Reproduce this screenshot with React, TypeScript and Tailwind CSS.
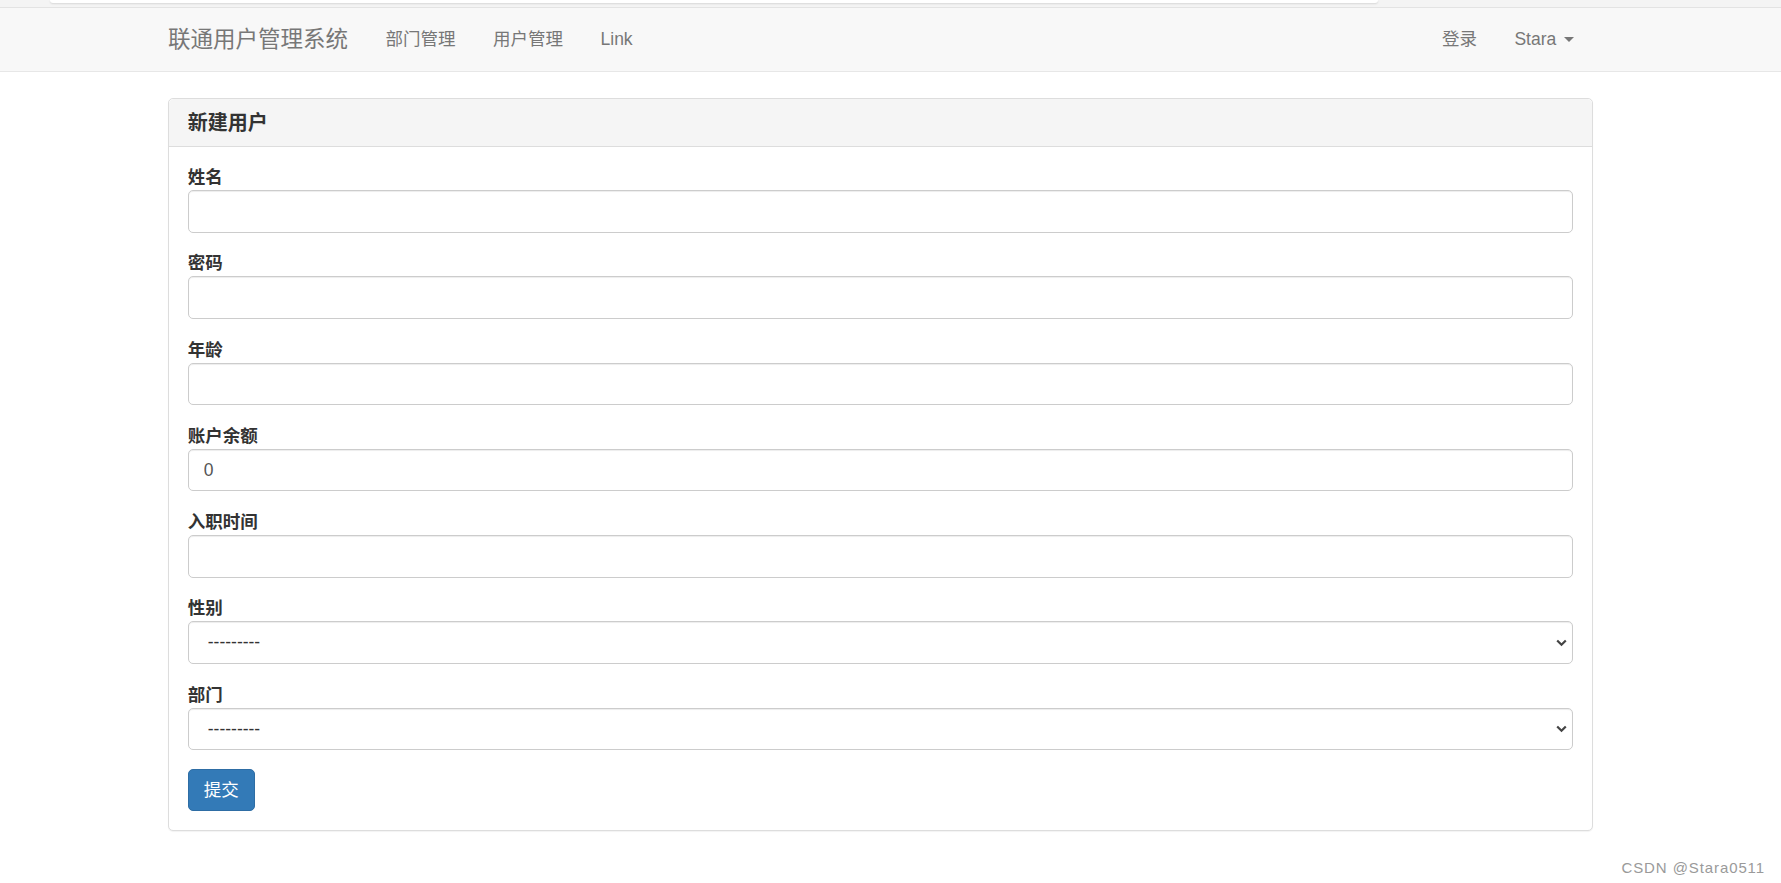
const font = {
  fontFamily: '"Liberation Sans", "Noto Sans CJK SC", sans-serif',
};

const fields = [
  { label: "姓名", value: "" },
  { label: "密码", value: "" },
  { label: "年龄", value: "" },
  { label: "账户余额", value: "0" },
  { label: "入职时间", value: "" },
];

const selects = ["性别", "部门"];

const NavLink = ({ children }: { children: React.ReactNode }) => (
  <a className="px-[18.75px] text-[17.5px] leading-[25px] text-[#777]">{children}</a>
);

const Chevron = () => (
  <svg
    className="pointer-events-none absolute right-[6px] top-1/2 -translate-y-1/2"
    width="11"
    height="8"
    viewBox="0 0 11 8"
    fill="none"
  >
    <path d="M1.2 1.5 5.5 5.8 9.8 1.5" stroke="#444" strokeWidth="2.2" />
  </svg>
);

export default function App() {
  return (
    <div className="relative h-[883px] overflow-hidden bg-white" style={font}>
      {/* browser chrome remnant */}
      <div className="h-[8px] border-b border-[#e3e3e3] bg-[#f4f4f4]">
        <div className="ml-[50px] h-[3px] w-[1328px] rounded-b-[8px] bg-white shadow-[0_1px_2px_rgba(0,0,0,0.12)]" />
      </div>

      <nav className="h-[64px] border-b border-[#e7e7e7] bg-[#f8f8f8]">
        <div className="ml-[168px] flex h-full w-[1425px] items-center justify-between">
          <div className="flex items-center">
            <span className="pr-[18.75px] text-[22.5px] leading-[25px] text-[#777]">
              联通用户管理系统
            </span>
            <NavLink>部门管理</NavLink>
            <NavLink>用户管理</NavLink>
            <NavLink>Link</NavLink>
          </div>
          <div className="flex items-center">
            <NavLink>登录</NavLink>
            <a className="flex items-center px-[18.75px] text-[17.5px] leading-[25px] text-[#777]">
              Stara
              <span className="ml-[8px] h-0 w-0 border-l-[5px] border-r-[5px] border-t-[5px] border-l-transparent border-r-transparent border-t-[#777]" />
            </a>
          </div>
        </div>
      </nav>

      <div className="ml-[168px] mt-[26px] w-[1425px] rounded-[5px] border border-[#ddd] bg-white shadow-[0_1px_1px_rgba(0,0,0,0.05)]">
        <div className="rounded-t-[5px] border-b border-[#ddd] bg-[#f5f5f5] px-[18.75px] py-[12.5px]">
          <h3 className="text-[20px] font-bold leading-[22px] text-[#333]">新建用户</h3>
        </div>
        <form className="px-[18.75px] pb-[18.75px] pt-[18px]">
          {fields.map((f) => (
            <div key={f.label} className="mb-[18.75px]">
              <label className="block text-[17.5px] font-bold leading-[25px] text-[#333]">
                {f.label}
              </label>
              <input
                readOnly
                defaultValue={f.value}
                className="block h-[42.5px] w-full rounded-[5px] border border-[#ccc] bg-white px-[15px] text-[17.5px] text-[#555] shadow-[inset_0_1px_1px_rgba(0,0,0,0.075)] outline-none"
              />
            </div>
          ))}
          {selects.map((s) => (
            <div key={s} className="mb-[18.75px]">
              <label className="block text-[17.5px] font-bold leading-[25px] text-[#333]">
                {s}
              </label>
              <div className="relative">
                <select className="block h-[42.5px] w-full appearance-none rounded-[5px] border border-[#ccc] bg-white pl-[19px] pr-[30px] text-[17.5px] text-[#333] shadow-[inset_0_1px_1px_rgba(0,0,0,0.075)] outline-none">
                  <option>---------</option>
                </select>
                <Chevron />
              </div>
            </div>
          ))}
          <button
            type="button"
            className="h-[42.5px] rounded-[5px] border border-[#2e6da4] bg-[#337ab7] px-[15px] text-[17.5px] leading-[25px] text-white"
          >
            提交
          </button>
        </form>
      </div>

      <div className="absolute right-[16px] top-[857px] text-[15px] tracking-[0.9px] text-[#9a9a9a]">
        CSDN @Stara0511
      </div>
    </div>
  );
}
